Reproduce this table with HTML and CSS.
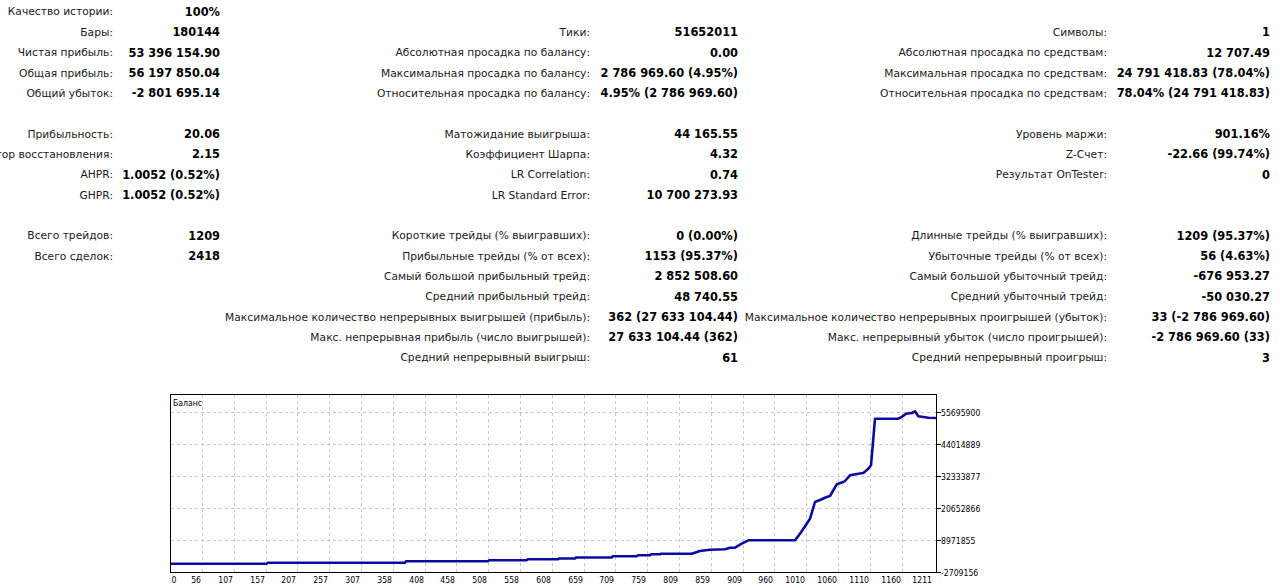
FILE: index.html
```html
<!DOCTYPE html>
<html lang="ru">
<head>
<meta charset="utf-8">
<title>Отчет тестера</title>
<link rel="stylesheet" href="styles.css">
</head>
<body>
<div class="stats">
  <div class="l">Качество истории:</div><div class="v">100%</div><div></div><div></div><div></div><div></div>
  <div class="l">Бары:</div><div class="v">180144</div><div class="l">Тики:</div><div class="v">51652011</div><div class="l">Символы:</div><div class="v">1</div>
  <div class="l">Чистая прибыль:</div><div class="v">53 396 154.90</div><div class="l">Абсолютная просадка по балансу:</div><div class="v">0.00</div><div class="l">Абсолютная просадка по средствам:</div><div class="v">12 707.49</div>
  <div class="l">Общая прибыль:</div><div class="v">56 197 850.04</div><div class="l">Максимальная просадка по балансу:</div><div class="v">2 786 969.60 (4.95%)</div><div class="l">Максимальная просадка по средствам:</div><div class="v">24 791 418.83 (78.04%)</div>
  <div class="l">Общий убыток:</div><div class="v">-2 801 695.14</div><div class="l">Относительная просадка по балансу:</div><div class="v">4.95% (2 786 969.60)</div><div class="l">Относительная просадка по средствам:</div><div class="v">78.04% (24 791 418.83)</div>
  <div class="gap"></div>
  <div class="l">Прибыльность:</div><div class="v">20.06</div><div class="l">Матожидание выигрыша:</div><div class="v">44 165.55</div><div class="l">Уровень маржи:</div><div class="v">901.16%</div>
  <div class="l">Фактор восстановления:</div><div class="v">2.15</div><div class="l">Коэффициент Шарпа:</div><div class="v">4.32</div><div class="l">Z-Счет:</div><div class="v">-22.66 (99.74%)</div>
  <div class="l">AHPR:</div><div class="v">1.0052 (0.52%)</div><div class="l">LR Correlation:</div><div class="v">0.74</div><div class="l">Результат OnTester:</div><div class="v">0</div>
  <div class="l">GHPR:</div><div class="v">1.0052 (0.52%)</div><div class="l">LR Standard Error:</div><div class="v">10 700 273.93</div><div></div><div></div>
  <div class="gap"></div>
  <div class="l">Всего трейдов:</div><div class="v">1209</div><div class="l">Короткие трейды (% выигравших):</div><div class="v">0 (0.00%)</div><div class="l">Длинные трейды (% выигравших):</div><div class="v">1209 (95.37%)</div>
  <div class="l">Всего сделок:</div><div class="v">2418</div><div class="l">Прибыльные трейды (% от всех):</div><div class="v">1153 (95.37%)</div><div class="l">Убыточные трейды (% от всех):</div><div class="v">56 (4.63%)</div>
  <div></div><div></div><div class="l">Самый большой прибыльный трейд:</div><div class="v">2 852 508.60</div><div class="l">Самый большой убыточный трейд:</div><div class="v">-676 953.27</div>
  <div></div><div></div><div class="l">Средний прибыльный трейд:</div><div class="v">48 740.55</div><div class="l">Средний убыточный трейд:</div><div class="v">-50 030.27</div>
  <div></div><div></div><div class="l">Максимальное количество непрерывных выигрышей (прибыль):</div><div class="v">362 (27 633 104.44)</div><div class="l">Максимальное количество непрерывных проигрышей (убыток):</div><div class="v">33 (-2 786 969.60)</div>
  <div></div><div></div><div class="l">Макс. непрерывная прибыль (число выигрышей):</div><div class="v">27 633 104.44 (362)</div><div class="l">Макс. непрерывный убыток (число проигрышей):</div><div class="v">-2 786 969.60 (33)</div>
  <div></div><div></div><div class="l">Средний непрерывный выигрыш:</div><div class="v">61</div><div class="l">Средний непрерывный проигрыш:</div><div class="v">3</div>
</div>

<svg class="chart" width="830" height="203" viewBox="160 385 830 203" xmlns="http://www.w3.org/2000/svg">
  <rect x="160" y="385" width="830" height="203" fill="#fff"/>
  <g class="grid">
    <path d="M202.5 393V570M234.5 393V570M266.5 393V570M297.5 393V570M329.5 393V570M361.5 393V570M393.5 393V570M425.5 393V570M456.5 393V570M488.5 393V570M520.5 393V570M552.5 393V570M584.5 393V570M615.5 393V570M647.5 393V570M679.5 393V570M711.5 393V570M743.5 393V570M774.5 393V570M806.5 393V570M838.5 393V570M870.5 393V570M902.5 393V570"/>
    <path d="M171 410.5H936M171 442.5H936M171 474.5H936M171 506.5H936M171 538.5H936"/>
  </g>
  <rect class="frame" x="170.5" y="392.5" width="766" height="178"/>
  <path class="ticks" d="M937 410.5H941M937 442.5H941M937 474.5H941M937 506.5H941M937 538.5H941M937 570.5H941"/>
  <text class="title" x="173" y="404">Баланс</text>
  <polyline class="curve" points="171,561.7 266.7,561.7 267.5,560.7 405,560.7 406,559.3 488,559.3 489,558.3 526.7,558.3 527.5,557.3 558,557.3 559,556.5 575,556.5 576,555.5 611.7,555.5 612.5,554.3 636.7,554.3 638,553.3 650,553.3 651,552.3 660,552.3 661,551.7 691.7,551.7 700,549 710,547.7 725,547.3 730,545.7 735,545.7 741.7,541.7 748.3,538.3 795,538.3 800,531.7 806.7,521.7 810,516.7 815,500 821.7,497.3 826.7,495 830,494 836.7,482.3 843.3,480 845,479 850,473.3 858.3,471.7 863.3,471 868.3,466.7 871,463.3 875,416.7 898.3,416.7 901.7,415 906,411.7 911.7,411 915,409.3 918.3,414.3 923.3,415 928.3,415.7 936,416"/>
  <g class="ylab">
    <text x="941" y="413.5">55695900</text>
    <text x="941" y="445.5">44014889</text>
    <text x="941" y="477.5">32333877</text>
    <text x="941" y="509.5">20652866</text>
    <text x="941" y="541.5">8971855</text>
    <text x="941" y="573.5">-2709156</text>
  </g>
  <g class="xlab">
    <text x="171.5" y="581" class="first">0</text>
    <text x="201" y="581">56</text>
    <text x="233" y="581">107</text>
    <text x="265" y="581">157</text>
    <text x="296" y="581">207</text>
    <text x="328" y="581">257</text>
    <text x="360" y="581">307</text>
    <text x="392" y="581">358</text>
    <text x="424" y="581">408</text>
    <text x="455" y="581">458</text>
    <text x="487" y="581">508</text>
    <text x="519" y="581">558</text>
    <text x="551" y="581">608</text>
    <text x="583" y="581">659</text>
    <text x="614" y="581">709</text>
    <text x="646" y="581">759</text>
    <text x="678" y="581">809</text>
    <text x="710" y="581">859</text>
    <text x="742" y="581">909</text>
    <text x="773" y="581">960</text>
    <text x="805" y="581">1010</text>
    <text x="837" y="581">1060</text>
    <text x="869" y="581">1110</text>
    <text x="901" y="581">1160</text>
    <text x="932" y="581">1211</text>
  </g>
</svg>
</body>
</html>
```

FILE: styles.css
```css
html, body {
  margin: 0;
  padding: 0;
  background: #ffffff;
}

body {
  font-family: "DejaVu Sans", "Liberation Sans", sans-serif;
  font-size: 10.7px;
  color: #000000;
  overflow: hidden;
}

.stats {
  display: grid;
  grid-template-columns: 113px 107px 370px 148px 369px 163px;
  grid-auto-rows: 20.35px;
  padding-top: 1.8px;
}

.stats > div {
  display: flex;
  align-items: center;
  justify-content: flex-end;
  white-space: nowrap;
}

.stats .l {
  color: #1a1a1a;
}

.stats .v {
  font-weight: bold;
  font-size: 11.4px;
}

.stats .gap {
  grid-column: 1 / -1;
}

.chart {
  display: block;
  margin: 19px 0 0 160px;
}

.chart .grid path {
  fill: none;
  stroke: #c8c8c8;
  stroke-width: 1;
  stroke-dasharray: 3 3;
}

.chart .frame {
  fill: none;
  stroke: #000000;
  stroke-width: 1;
}

.chart .ticks {
  fill: none;
  stroke: #000000;
  stroke-width: 1;
}

.chart .curve {
  fill: none;
  stroke: #0c0c9c;
  stroke-width: 2.6;
  stroke-linejoin: round;
}

.chart text {
  font-family: "DejaVu Sans Condensed", "DejaVu Sans", sans-serif;
  font-stretch: condensed;
  font-size: 8.6px;
  fill: #000000;
}

.chart .xlab text {
  text-anchor: end;
}

.chart .xlab text.first {
  text-anchor: start;
}
```
